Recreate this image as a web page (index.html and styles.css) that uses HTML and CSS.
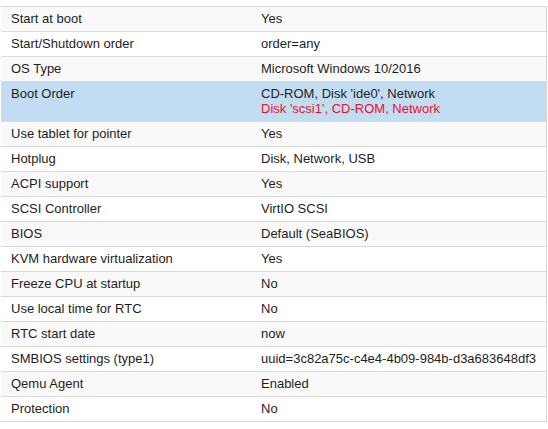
FILE: index.html
```html
<!DOCTYPE html>
<html>
<head>
<meta charset="utf-8">
<link rel="stylesheet" href="styles.css">
</head>
<body>
<div class="grid">
  <div class="row alt"><div class="k">Start at boot</div><div class="v">Yes</div></div>
  <div class="row"><div class="k">Start/Shutdown order</div><div class="v">order=any</div></div>
  <div class="row alt"><div class="k">OS Type</div><div class="v">Microsoft Windows 10/2016</div></div>
  <div class="row sel"><div class="k">Boot Order</div><div class="v">CD-ROM, Disk 'ide0', Network<br><span class="pending">Disk 'scsi1', CD-ROM, Network</span></div></div>
  <div class="row alt"><div class="k">Use tablet for pointer</div><div class="v">Yes</div></div>
  <div class="row"><div class="k">Hotplug</div><div class="v">Disk, Network, USB</div></div>
  <div class="row alt"><div class="k">ACPI support</div><div class="v">Yes</div></div>
  <div class="row"><div class="k">SCSI Controller</div><div class="v">VirtIO SCSI</div></div>
  <div class="row alt"><div class="k">BIOS</div><div class="v">Default (SeaBIOS)</div></div>
  <div class="row"><div class="k">KVM hardware virtualization</div><div class="v">Yes</div></div>
  <div class="row alt"><div class="k">Freeze CPU at startup</div><div class="v">No</div></div>
  <div class="row"><div class="k">Use local time for RTC</div><div class="v">No</div></div>
  <div class="row alt"><div class="k">RTC start date</div><div class="v">now</div></div>
  <div class="row"><div class="k">SMBIOS settings (type1)</div><div class="v">uuid=3c82a75c-c4e4-4b09-984b-d3a683648df3</div></div>
  <div class="row alt"><div class="k">Qemu Agent</div><div class="v">Enabled</div></div>
  <div class="row last"><div class="k">Protection</div><div class="v">No</div></div>
</div>
</body>
</html>
```

FILE: styles.css
```css
html, body {
  margin: 0;
  padding: 0;
  background: #fff;
}
body {
  padding-top: 6px;
  font-family: "Liberation Sans", Arial, sans-serif;
  font-size: 13px;
  color: #1e1e1e;
}
.grid {
  width: 547px;
  border-right: 1px solid #d6d6d6;
  padding-left: 1px;
  box-sizing: border-box;
}
.row {
  display: grid;
  grid-template-columns: 250px 1fr;
  border-top: 1px solid #d9d9d9;
  background: #fff;
}
.row.alt {
  background: #f9f9f9;
}
.row.last {
  border-bottom: 1px solid #d9d9d9;
}
.row.sel {
  background: #c2ddf1;
  border-top-color: #c2ddf1;
}
.row.sel + .row {
  border-top-color: #d9d9d9;
}
.k, .v {
  padding: 4px 10px 5px 10px;
  line-height: 15px;
  white-space: nowrap;
}
.pending {
  color: #e8102e;
}
```
